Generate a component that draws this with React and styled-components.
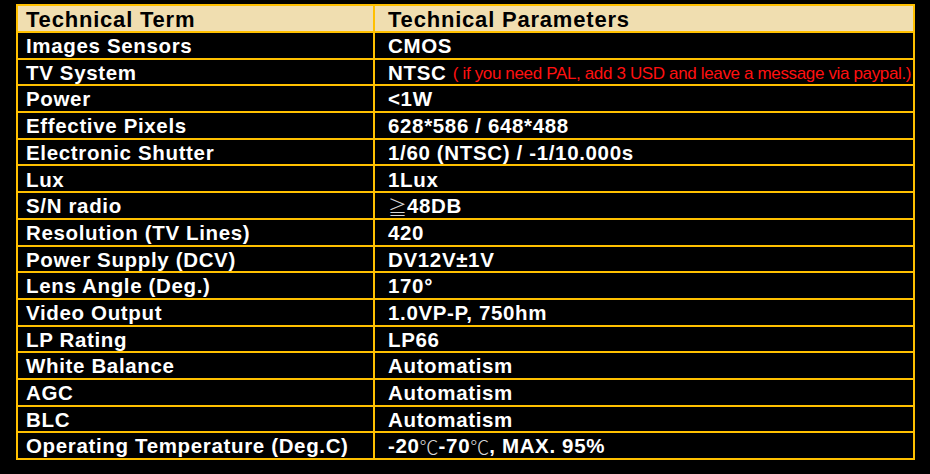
import React from 'react';
import styled, { createGlobalStyle } from 'styled-components';

const GlobalStyle = createGlobalStyle`
  html, body {
    margin: 0;
    padding: 0;
    background: #000;
  }
  body {
    font-family: "Liberation Sans", Arial, sans-serif;
  }
`;

const rows = [
  ['Images Sensors', 'CMOS'],
  ['TV System', 'NTSC', 'note'],
  ['Power', '<1W'],
  ['Effective Pixels', '628*586 / 648*488'],
  ['Electronic Shutter', '1/60 (NTSC) / -1/10.000s'],
  ['Lux', '1Lux'],
  ['S/N radio', 'snr'],
  ['Resolution (TV Lines)', '420'],
  ['Power Supply (DCV)', 'DV12V±1V'],
  ['Lens Angle (Deg.)', '170°'],
  ['Video Output', '1.0VP-P, 750hm'],
  ['LP Rating', 'LP66'],
  ['White Balance', 'Automatism'],
  ['AGC', 'Automatism'],
  ['BLC', 'Automatism'],
  ['Operating Temperature (Deg.C)', 'temp'],
];

const Page = styled.div`
  padding: 4px 0 0 16px;
  height: 474px;
  box-sizing: border-box;
`;

const Table = styled.div`
  display: grid;
  grid-template-columns: 355px 538px;
  grid-template-rows: 25px repeat(16, 1fr);
  gap: 2px;
  padding: 2px;
  width: 899px;
  height: 456px;
  box-sizing: border-box;
  background: #ffc000;
`;

const Cell = styled.div`
  display: flex;
  align-items: center;
  padding: ${(p) => (p.$right ? '2px 0 0 13px' : '2px 0 0 8px')};
  background: ${(p) => (p.$head ? '#f0deb0' : '#000')};
  color: ${(p) => (p.$head ? '#000' : '#fff')};
  font-weight: bold;
  font-size: ${(p) => (p.$head ? '22px' : '20.5px')};
  line-height: 1;
  letter-spacing: ${(p) => (p.$head ? '0.8px' : '0.65px')};
  white-space: nowrap;
`;

const Note = styled.span`
  color: #ff1010;
  font-weight: normal;
  font-size: 17px;
  letter-spacing: -0.35px;
  margin-left: 2px;
`;

const Sym = styled.span`
  font-family: "Noto Sans CJK SC", sans-serif;
  font-weight: 300;
  font-size: 19px;
  line-height: 1;
  color: #d8d8d8;
  letter-spacing: 0;
`;

const renderValue = (value, extra) => {
  if (extra === 'note') {
    return (
      <>
        {value}
        <Note>&nbsp;( if you need PAL, add 3 USD and leave a message via paypal.)</Note>
      </>
    );
  }
  if (value === 'snr') {
    return (
      <>
        <Sym>≧</Sym>48DB
      </>
    );
  }
  if (value === 'temp') {
    return (
      <>
        -20<Sym>℃</Sym>-70<Sym>℃</Sym>, MAX. 95%
      </>
    );
  }
  return value;
};

const App = () => (
  <Page>
    <GlobalStyle />
    <Table>
      <Cell $head>Technical Term</Cell>
      <Cell $head $right>Technical Parameters</Cell>
      {rows.map(([term, value, extra]) => (
        <React.Fragment key={term}>
          <Cell>{term}</Cell>
          <Cell $right>{renderValue(value, extra)}</Cell>
        </React.Fragment>
      ))}
    </Table>
  </Page>
);

export default App;
